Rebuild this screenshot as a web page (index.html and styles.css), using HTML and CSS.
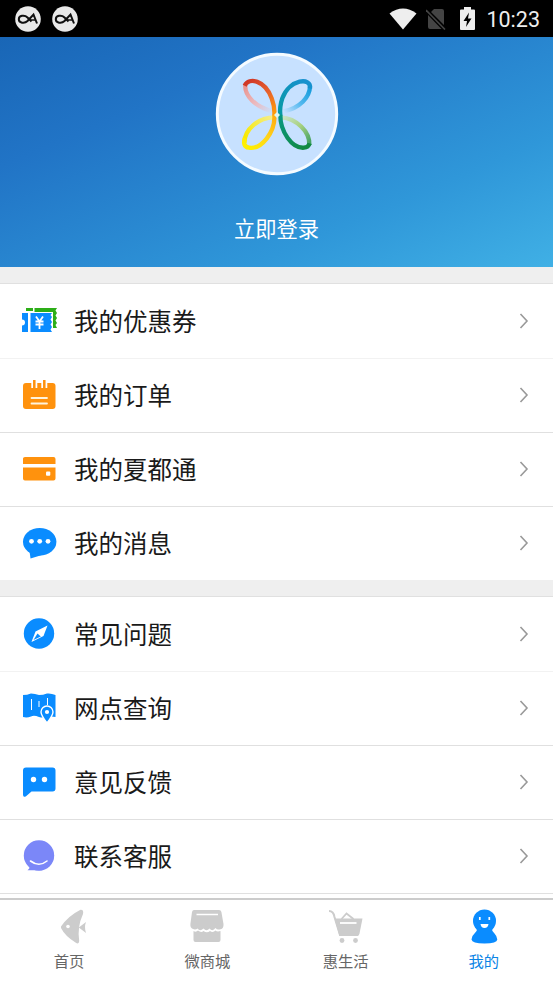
FILE: index.html
```html
<!DOCTYPE html>
<html lang="zh-CN">
<head>
    <meta charset="UTF-8">
    <meta name="viewport" content="width=device-width, initial-scale=1.0">
    <title>我的</title>
    <link rel="stylesheet" href="styles.css">
</head>
<body>
    <div class="status-bar">
        <div class="status-left">
            <svg class="badge" viewBox="0 0 26 26"><circle cx="13" cy="13" r="12.8" fill="#e9e9e9"/><path d="M22 17.5 L18.5 8.5 L12.5 15 C9.5 18 3.8 17 3.8 13.2 C3.8 9.500 9.500 8.500 12.5 11.5 L16.500 15.500" fill="none" stroke="#111" stroke-width="2"/><path d="M14.500 14 H20" stroke="#111" stroke-width="1.500"/></svg>
            <svg class="badge" viewBox="0 0 26 26"><circle cx="13" cy="13" r="12.8" fill="#e9e9e9"/><path d="M22 17.5 L18.5 8.5 L12.5 15 C9.5 18 3.8 17 3.8 13.2 C3.8 9.500 9.500 8.500 12.5 11.5 L16.500 15.500" fill="none" stroke="#111" stroke-width="2"/><path d="M14.500 14 H20" stroke="#111" stroke-width="1.500"/></svg>
        </div>
        <div class="status-right">
            <svg class="wifi" viewBox="0 0 28 22"><path d="M0.5 5.5 Q14 -4.5 27.5 5.5 L14 21.5Z" fill="#eee"/></svg>
            <svg class="sim" viewBox="0 0 20 22"><path d="M8 1 H16 Q18 1 18 3 V17 L5 4Z M2 7 L15.5 21 H4 Q2 21 2 19Z" fill="#444"/><path d="M0 2 L19 21.5" stroke="#444" stroke-width="1.6"/></svg>
            <svg class="battery" viewBox="0 0 15 23"><path d="M4 0 H11 V2.5 H14 Q15 2.5 15 3.5 V22 Q15 23 14 23 H1 Q0 23 0 22 V3.5 Q0 2.5 1 2.5 H4Z" fill="#eee"/><path d="M9 5.5 L3.5 14 H7 L6 20 L11.5 11.5 H8Z" fill="#000"/></svg>
            <span class="clock">10:23</span>
        </div>
    </div>

    <header class="profile">
        <svg class="avatar" viewBox="26 23 372 372">
            <defs>
                <linearGradient id="red" gradientUnits="userSpaceOnUse" x1="120" y1="110" x2="205" y2="210"><stop offset="0" stop-color="#cf3526"/><stop offset=".5" stop-color="#e65f2d"/><stop offset="1" stop-color="#ff9d08"/></linearGradient>
                <linearGradient id="pink" gradientUnits="userSpaceOnUse" x1="118" y1="125" x2="198" y2="203"><stop offset="0" stop-color="#e99591"/><stop offset=".5" stop-color="#ecb9bd"/><stop offset="1" stop-color="#c7e1ff"/></linearGradient>
                <linearGradient id="blue" gradientUnits="userSpaceOnUse" x1="305" y1="115" x2="225" y2="205"><stop offset="0" stop-color="#1791cf"/><stop offset="1" stop-color="#0799a5"/></linearGradient>
                <linearGradient id="sky" gradientUnits="userSpaceOnUse" x1="310" y1="130" x2="232" y2="203"><stop offset="0" stop-color="#159bdb"/><stop offset=".5" stop-color="#54b9ef"/><stop offset="1" stop-color="#c7e1ff"/></linearGradient>
                <linearGradient id="gold" gradientUnits="userSpaceOnUse" x1="115" y1="300" x2="207" y2="215"><stop offset="0" stop-color="#fff000"/><stop offset=".5" stop-color="#ffd51b"/><stop offset="1" stop-color="#ffab12"/></linearGradient>
                <linearGradient id="lemon" gradientUnits="userSpaceOnUse" x1="115" y1="275" x2="203" y2="218"><stop offset="0" stop-color="#f8e900"/><stop offset="1" stop-color="#f3ee93"/></linearGradient>
                <linearGradient id="green" gradientUnits="userSpaceOnUse" x1="220" y1="215" x2="300" y2="315"><stop offset="0" stop-color="#079782"/><stop offset="1" stop-color="#12893f"/></linearGradient>
                <linearGradient id="lime" gradientUnits="userSpaceOnUse" x1="230" y1="218" x2="310" y2="295"><stop offset="0" stop-color="#c9e4c8"/><stop offset=".5" stop-color="#a8d180"/><stop offset="1" stop-color="#45a264"/></linearGradient>
            </defs>
            <circle cx="212" cy="209" r="179" fill="#c7e1ff" stroke="#f5fbff" stroke-width="9"/>
            <g fill="none" stroke-width="13">
                <path d="M117 122 C114 152 146 189 200 201" stroke="url(#pink)"/>
                <path d="M311 126 C310 158 281 192 231 201" stroke="url(#sky)"/>
                <path d="M205 219 C158 218 114 255 114 296" stroke="url(#lemon)"/>
                <path d="M224 219 C270 222 311 262 309 302" stroke="url(#lime)"/>
                <path d="M115 124 C128 98 176 107 196 162 Q206 188 204 214" stroke="url(#red)"/>
                <path d="M311 132 C316 98 250 103 228 162 Q219 188 222 214" stroke="url(#blue)"/>
                <path d="M204 211 C208 264 164 316 128 310 C112 308 111 294 116 282" stroke="url(#gold)"/>
                <path d="M222 211 C221 262 258 313 293 310 Q306 309 310 297" stroke="url(#green)"/>
            </g>
            <path d="M212 203 L221 212 L212 221 L203 212Z" fill="#e0f5ef"/>
        </svg>
        <div class="login">立即登录</div>
    </header>

    <main>
        <ul class="menu">
            <li>
                <svg class="icon" viewBox="0 0 36 36"><path d="M4 5 H11 V8 H4Z M12.5 5 H35 L33.5 7.5 L35 10 L33.5 12.5 L35 15 L33.5 17.5 L35 20 L33.5 22 L35 25 H31 V9 H12.5Z" fill="#2dae18"/><path d="M0 10 H6 V29 H0 V22.5 A3 3 0 0 0 0 16.5Z M8.5 10 H30 L28.5 12 L30 14 L28.5 16.5 L30 19 L28.5 21.5 L30 24 L28.5 26.5 L30 29 H8.5Z" fill="#0a8cff"/><path d="M14 13.5 L17.5 18.5 L21 13.5 M13.5 18.5 H21.5 M13.5 21.5 H21.5 M17.5 18.5 V26" fill="none" stroke="#fff" stroke-width="1.8"/></svg>
                <span class="label">我的优惠券</span>
                <svg class="arrow" viewBox="0 0 10 16"><path d="M1.5 1 L8 8 L1.5 15"/></svg>
            </li>
            <li class="faint">
                <svg class="icon" viewBox="0 0 36 36"><rect x="1" y="6" width="32.5" height="26" rx="3" fill="#ff920d"/><path d="M12.3 3.5 V11 M22.3 3.5 V11" stroke="#fff" stroke-width="6"/><path d="M12.3 3 V12 M22.3 3 V12" stroke="#ff920d" stroke-width="2.5"/><path d="M9.5 21 H25 M9.5 26.5 H25" stroke="#fff3dc" stroke-width="1.8" stroke-linecap="round"/></svg>
                <span class="label">我的订单</span>
                <svg class="arrow" viewBox="0 0 10 16"><path d="M1.5 1 L8 8 L1.5 15"/></svg>
            </li>
            <li>
                <svg class="icon" viewBox="0 0 36 36"><path d="M1 13 V7.5 Q1 6 3 6 H31.5 Q33.5 6 33.5 8 V13Z M1 16.5 H33.5 V27.5 Q33.5 29.5 31.5 29.5 H3 Q1 29.5 1 27.5Z" fill="#ff920d"/><rect x="24" y="20.5" width="4.3" height="4.3" rx="1" fill="#fff"/></svg>
                <span class="label">我的夏都通</span>
                <svg class="arrow" viewBox="0 0 10 16"><path d="M1.5 1 L8 8 L1.5 15"/></svg>
            </li>
            <li>
                <svg class="icon" viewBox="0 0 36 36"><ellipse cx="17.7" cy="16.8" rx="16.7" ry="13.8" fill="#0a8cff"/><path d="M7.5 26 L8.5 33.5 L20 30Z" fill="#0a8cff"/><g fill="#fff"><circle cx="9.5" cy="16.3" r="2.4"/><circle cx="17.7" cy="16.3" r="2.4"/><circle cx="26" cy="16.3" r="2.4"/></g></svg>
                <span class="label">我的消息</span>
                <svg class="arrow" viewBox="0 0 10 16"><path d="M1.5 1 L8 8 L1.5 15"/></svg>
            </li>
        </ul>

        <ul class="menu">
            <li>
                <svg class="icon" viewBox="0 0 36 36"><circle cx="17" cy="17.5" r="15.2" fill="#0a8cff"/><path d="M25.5 9.5 L21.5 20 L9.5 26 L13.5 15.5Z" fill="#fff"/><path d="M15.5 17.5 L18.8 20.5 L11.5 24Z" fill="#0a8cff"/></svg>
                <span class="label">常见问题</span>
                <svg class="arrow" viewBox="0 0 10 16"><path d="M1.5 1 L8 8 L1.5 15"/></svg>
            </li>
            <li class="faint">
                <svg class="icon" viewBox="0 0 36 36"><path d="M1 5 Q5 5 9 3.5 Q13 3.5 17 5 Q21 5 25 3.5 Q29 3 33.5 5 V27 Q29 26 25 27 Q21 28 17 27 Q12 25 9 26.5 Q5 28 1 27Z" fill="#0a8cff"/><path d="M9.5 9 V20 M17 11 V17 M25.5 8 V15" stroke="#fff" stroke-width="1"/><path d="M25 33 C21.5 28.5 19 25 19 22 A6 6 0 0 1 31 22 C31 25 28.5 28.5 25 33Z" fill="#0a8cff" stroke="#fff" stroke-width="1.4"/><circle cx="25" cy="22" r="2.1" fill="#fff"/></svg>
                <span class="label">网点查询</span>
                <svg class="arrow" viewBox="0 0 10 16"><path d="M1.5 1 L8 8 L1.5 15"/></svg>
            </li>
            <li>
                <svg class="icon" viewBox="0 0 36 36"><path d="M4 3.5 H30.5 Q33.5 3.5 33.5 6.5 V24.5 Q33.5 27.5 30.5 27.5 H9.5 L4 32.3 Q1 34 1 30.5 V6.5 Q1 3.5 4 3.5Z" fill="#0a8cff"/><g fill="#fff"><circle cx="11.5" cy="15.5" r="2.7"/><circle cx="22.5" cy="15.5" r="2.7"/></g></svg>
                <span class="label">意见反馈</span>
                <svg class="arrow" viewBox="0 0 10 16"><path d="M1.5 1 L8 8 L1.5 15"/></svg>
            </li>
            <li>
                <svg class="icon" viewBox="0 0 36 36"><circle cx="17" cy="17.5" r="15.2" fill="#7b87f8"/><path d="M4 24 L7.5 28.5 Q8 30.5 5.5 32.3 H20Z" fill="#7b87f8"/><path d="M8.5 23 Q17 29.5 25 23" fill="none" stroke="#fff" stroke-width="1.6" stroke-linecap="round"/></svg>
                <span class="label">联系客服</span>
                <svg class="arrow" viewBox="0 0 10 16"><path d="M1.5 1 L8 8 L1.5 15"/></svg>
            </li>
        </ul>
    </main>

    <nav class="tabs">
        <a class="tab">
            <svg viewBox="0 0 36 36"><path d="M10 17.5 Q17 7 29.5 0.7 Q33 0.5 32 5 Q26 18 28.200 32 Q28 36 24.500 33.5 Q14 27 10 19Z M35 13 Q33 18 35 24 L27.8 18.5Z" fill="#ccc"/><circle cx="17" cy="17.5" r="1.8" fill="#fff"/></svg>
            <span>首页</span>
        </a>
        <a class="tab">
            <svg viewBox="0 0 36 36"><path d="M5 1 H30 Q32 1 32.4 3 L34.5 15 Q35 20 30.5 20.5 Q28 21 26.5 19 Q23.5 23 20.5 19.5 Q17.5 23 14.5 19.5 Q11 23 8.5 19.5 Q6.5 21 4 20 Q1 19 1.4 15 L3 3 Q3.5 1 5 1Z M4.5 22 Q7 23.5 9 21.5 Q12 24 14.5 22 Q18 24.5 21 22 Q24 24 26.5 21.5 Q28 23 31.5 22 V31 Q31.5 33 29.5 33 H6.5 Q4.500 33 4.5 31Z" fill="#ccc"/><path d="M7.5 5.5 H29" stroke="#fff" stroke-width="1.5"/></svg>
            <span>微商城</span>
        </a>
        <a class="tab">
            <svg viewBox="0 0 36 36"><path d="M1 2 Q5.5 2 6.500 8 L12 26 H30" fill="none" stroke="#ccc" stroke-width="2"/><path d="M6.5 9.5 H34.5 L31.5 24.5 Q31 27 29 27 H11.5Z" fill="#ccc"/><path d="M13.5 10 L18.5 4.5 L25.5 10" fill="none" stroke="#ccc" stroke-width="1.8"/><path d="M12 14 H28.5" stroke="#fff" stroke-width="1.8"/><circle cx="14" cy="31.5" r="2.4" fill="#ccc"/><circle cx="27.5" cy="31.5" r="2.4" fill="#ccc"/></svg>
            <span>惠生活</span>
        </a>
        <a class="tab active">
            <svg viewBox="0 0 36 36"><circle cx="18.5" cy="12" r="11.5" fill="#0a8cff"/><path d="M11.5 19 Q11 22.5 8.5 24.5 Q5.5 27 5.5 30.5 Q6 34.5 18.5 34.5 Q31 34.5 31.3 30.5 Q31 27 28.5 24.5 Q26 22.5 25.5 19Z" fill="#0a8cff"/><path d="M13.8 8 V11 M23.3 8 V11" stroke="#fff" stroke-width="1.7"/><path d="M14.5 15 H22.500 Q22 19 18.5 19 Q15 19 14.5 15Z" fill="#fff"/></svg>
            <span>我的</span>
        </a>
    </nav>
</body>
</html>
```
FILE: styles.css
```css
* {
    box-sizing: border-box;
}

body {
    font-family: "Noto Sans CJK SC", sans-serif;
    margin: 0;
    height: 983px;
    display: flex;
    flex-direction: column;
    background-color: #fff;
    overflow: hidden;
}

svg {
    display: block;
    flex-shrink: 0;
}

.status-bar {
    height: 37px;
    flex-shrink: 0;
    padding: 0 13px 0 15px;
    display: flex;
    justify-content: space-between;
    align-items: center;
    background-color: #000;
}

.status-left,
.status-right {
    display: flex;
    align-items: center;
}

.status-left {
    gap: 11px;
}

.badge {
    width: 26px;
    height: 26px;
}

.wifi {
    width: 28px;
    height: 22px;
    margin-right: 9px;
}

.sim {
    width: 20px;
    height: 22px;
    margin-right: 14px;
}

.battery {
    width: 15px;
    height: 23px;
    margin-right: 11px;
}

.clock {
    font-family: Roboto, sans-serif;
    font-size: 21.5px;
    line-height: 37px;
    padding-top: 1px;
    color: #eee;
}

.profile {
    height: 230px;
    flex-shrink: 0;
    padding-top: 15px;
    display: flex;
    flex-direction: column;
    align-items: center;
    background: linear-gradient(157deg, #1966b6 0%, #2174c6 28%, #2f97d9 72%, #40b0e5 100%);
}

.avatar {
    width: 124px;
    height: 124px;
}

.login {
    margin-top: 36px;
    font-size: 21.3px;
    line-height: 32px;
    color: #fff;
}

main {
    flex-shrink: 0;
    height: 631px;
}

.menu {
    list-style: none;
    margin: 0;
    padding: 16px 0 0;
    background-color: #efefef;
}

.menu li {
    height: 74px;
    padding: 0 24px 2px 22px;
    display: flex;
    align-items: center;
    background-color: #fff;
    border-top: 1px solid #e0e0e0;
}

.menu li:first-child {
    height: 75px;
    padding-bottom: 0;
}

.menu li.faint {
    border-top-color: #f2f2f2;
}

.menu:last-child {
    border-bottom: 1px solid #e0e0e0;
}

.icon {
    width: 36px;
    height: 36px;
    margin-right: 16px;
}

.label {
    flex: 1;
    font-size: 24.5px;
    line-height: 36px;
    color: #1a1a1a;
}

.arrow {
    width: 10px;
    height: 16px;
}

.arrow path {
    fill: none;
    stroke: #999;
    stroke-width: 1.6;
}

.tabs {
    flex: 1;
    display: flex;
    padding-top: 9px;
    border-top: 2px solid #ccc;
}

.tab {
    flex: 1;
    display: flex;
    flex-direction: column;
    align-items: center;
    font-size: 15.3px;
    line-height: 23px;
    color: #666;
}

.tab svg {
    width: 36px;
    height: 36px;
    margin-bottom: 4px;
}

.tab.active {
    color: #0b84e5;
}
```
